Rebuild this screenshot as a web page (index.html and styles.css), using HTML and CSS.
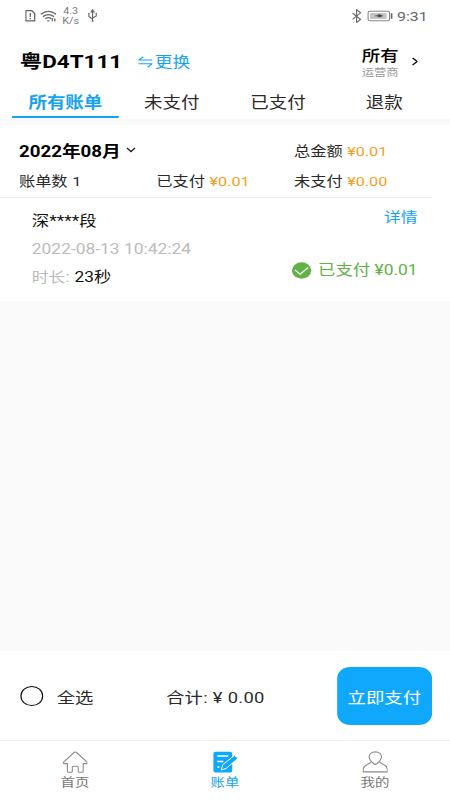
FILE: index.html
```html
<!DOCTYPE html>
<html lang="zh-CN">
<head>
<meta charset="utf-8">
<meta name="viewport" content="width=device-width, initial-scale=1">
<title>账单</title>
<link rel="stylesheet" href="styles.css">
</head>
<body>
<div class="app">
  <header class="status">
    <svg class="ic-left" viewBox="0 0 32 14" preserveAspectRatio="none" fill="none" stroke="#666" stroke-width="1.3">
      <path d="M.7 1.700h6l2.800 2.800v7.300H.7z"/><path d="M5.100 4v4M5.100 9v1.300"/>
      <path d="M15.500 5.300q7.700-6 15.400 0M17.700 7.600q5.500-4 11 0M20 9.800q3.200-2.300 6 0"/><path d="M22 11.800h2M27 9v3.300M29.600 9.600v3"/>
    </svg>
    <div class="speed">4.3<br>K/s</div>
    <svg class="ic-usb" viewBox="0 0 10 14" preserveAspectRatio="none" fill="none" stroke="#666" stroke-width="1.1">
      <path d="M5 1.500v11M1.300 5v2.500L5 10M8.700 5v2L5 9"/><path d="M3.500 3L5 .8 6.500 3zM.6 4.500h1.500M7.900 4.500h1.500M4 12h2"/>
    </svg>
    <svg class="ic-right" viewBox="0 0 42 14" preserveAspectRatio="none" fill="none" stroke="#666" stroke-width="1.1">
      <path d="M1 4l8 6.500-4 3V.8l4 3L1 10.400"/>
      <rect x="16.500" y="2.200" width="21.500" height="9.600" rx="1.500" stroke="#888"/><rect x="18.500" y="4" width="16.500" height="6" fill="#c4c4c4" stroke="none"/>
      <path d="M22 7l5-.9-.3-1.300L32 7l-5 1.500-.4-1z" fill="#444" stroke="none"/><path d="M40 4.300v5.400" stroke-width="1.600"/>
    </svg>
    <span class="clock">9:31</span>
  </header>

  <section class="plate">
    <h1>粤D4T111</h1>
    <a class="switch"><svg viewBox="0 0 15 12" preserveAspectRatio="none" fill="none" stroke="#16a3f0" stroke-width="1.1"><path d="M14.500 4H.8L5.300.7M.5 7.700h13.700L9.700 11.300"/></svg>更换</a>
    <div class="operator"><strong>所有</strong><small>运营商</small></div>
    <svg class="chevron" viewBox="0 0 7 9" preserveAspectRatio="none" fill="none" stroke="#111" stroke-width="1.5"><path d="M1 1l4.600 3.500L1 8"/></svg>
  </section>

  <nav class="tabs"><a class="on">所有账单</a><a>未支付</a><a>已支付</a><a>退款</a></nav>

  <section class="summary">
    <div class="month">2022年08月<svg viewBox="0 0 10 6" preserveAspectRatio="none" fill="none" stroke="#222" stroke-width="1.3"><path d="M1 1l4 3.600L9 1"/></svg></div>
    <div>总金额 <b>¥0.01</b></div>
    <div>账单数 <i>1</i></div>
    <div>已支付 <b>¥0.01</b></div>
    <div>未支付 <b>¥0.00</b></div>
  </section>

  <article class="bill">
    <div class="info">
      <p class="road">深****段</p>
      <p class="date">2022-08-13 10:42:24</p>
      <p class="time">时长: <span>23秒</span></p>
    </div>
    <div class="state">
      <a>详情</a>
      <p><svg viewBox="0 0 20 17" preserveAspectRatio="none"><ellipse cx="10" cy="8.500" rx="9.600" ry="8.200" fill="#62b146"/><path d="M3.500 8l5 4.200 8-6.700" fill="none" stroke="#fff" stroke-width="1.3"/></svg><span>已支付 ¥0.01</span></p>
    </div>
  </article>

  <main class="blank"></main>

  <section class="pay">
    <span class="radio"></span><span class="all">全选</span>
    <span class="total">合计: ¥ 0.00</span>
    <button>立即支付</button>
  </section>

  <footer class="nav">
    <a><svg viewBox="0 0 26 22" preserveAspectRatio="none" fill="none" stroke="#8c8c8c" stroke-width="1.1"><path d="M12 1.300Q13 .6 14 1.300L24.800 11q1 1.500-.8 1.600h-3v7.700q0 1-1 1h-3q-1 0-1-1v-4q0-1-1-1h-4q-1 0-1 1v4q0 1-1 1H6q-1 0-1-1v-7.700H2Q.2 12.500 1.200 11z"/></svg>首页</a>
    <a class="on"><svg viewBox="0 0 26 22" preserveAspectRatio="none"><path d="M3 .7h15q2 0 2 2v16.800q0 2-2 2H3q-2 0-2-2V2.700q0-2 2-2z" fill="#10a8fc"/><path d="M5 5h11M5 10.500h6M5 16h2" stroke="#fff" stroke-width="1.3"/><path d="M9 19l1.200-5L22.300 4.300l3.500 3L13.800 17.500z" fill="#10a8fc" stroke="#fff" stroke-width="1"/></svg>账单</a>
    <a><svg viewBox="0 0 26 22" preserveAspectRatio="none" fill="none" stroke="#8c8c8c" stroke-width="1.1"><path d="M13 .9c4 0 6.200 2.400 6.200 5.100 0 2.600-2.700 5-4.700 6.800q-1.500 1.200-3 0C9.500 11 6.800 8.600 6.800 6 6.800 3.300 9 .9 13 .9z"/><path d="M9 11.300L4 14Q.8 15.500.8 18.500V20.900h24.400v-2.400q0-3-3.200-4.500L17 11.300"/></svg>我的</a>
  </footer>
</div>
</body>
</html>
```

FILE: styles.css
```css
* { box-sizing: border-box; margin: 0; padding: 0; }
body { width: 450px; height: 800px; overflow: hidden; background: #fff; }
a { text-decoration: none; }
b, i { font-weight: 400; font-style: normal; }
svg { display: block; flex: none; }

/* 375-unit layout stretched to the full 450px width */
.app {
  width: 375px; height: 800px;
  display: flex; flex-direction: column;
  transform: scaleX(1.2); transform-origin: 0 0;
  font-family: Roboto, "Noto Sans CJK SC", sans-serif;
  color: #2a2a2a; background: #fff; white-space: nowrap;
}

.status { height: 32px; display: flex; align-items: center; padding: 0 18.700px 0 20.500px; color: #666; }
.ic-left { width: 26.700px; height: 14px; }
.speed { margin-left: 4.700px; font-size: 9px; line-height: 10px; text-align: center; width: 14px; color: #777; }
.ic-usb { margin-left: 6.800px; width: 8.300px; height: 14px; }
.ic-right { margin-left: auto; width: 35px; height: 14px; }
.clock { margin-left: 2.500px; font-size: 13.200px; }

.plate { height: 54px; display: flex; align-items: center; padding: 5px 0 0 16.500px; }
.plate h1 { font-size: 18.700px; line-height: 24px; font-weight: 700; color: #000; width: 98px; }
.switch { display: flex; align-items: center; font-size: 14.700px; line-height: 20px; color: #16a3f0; }
.switch svg { width: 12.500px; height: 12px; margin-right: 2px; }
.operator { margin-left: auto; width: 41px; padding-top: 2px; }
.operator strong, .operator small { display: block; }
.operator strong { font-size: 15.300px; line-height: 19px; font-weight: 500; color: #000; }
.operator small { font-size: 10.200px; line-height: 13px; color: #999; }
.chevron { width: 5.800px; height: 9px; margin-right: 26.700px; }

.tabs { height: 33px; display: grid; grid-template-columns: repeat(4, 88.600px); padding-left: 10.200px; }
.tabs a { font-size: 15.400px; line-height: 30px; padding-top: 2px; height: 32px; text-align: center; border-bottom: 2px solid transparent; }
.tabs .on { color: #16a3f0; font-weight: 700; border-color: #16a3f0; }

.summary {
  height: 79px; border-top: 6px solid #fafafa;
  display: grid; grid-template-columns: 114.500px 114.700px 1fr; grid-template-rows: 30px 30px;
  align-items: center; padding: 10px 0 0 15.800px;
  font-size: 13.500px; word-spacing: .5px;
}
.summary b { color: #f5a024; }
.month { grid-column: span 2; display: flex; align-items: center; font-size: 15.600px; font-weight: 700; color: #000; }
.month svg { width: 8.300px; height: 6px; margin-left: 4px; }

.bill { height: 103px; display: flex; justify-content: space-between; padding: 0 27px 0 26.500px; position: relative; font-size: 14px; }
.bill::before { content: ""; position: absolute; left: 0; top: -1px; width: 360px; height: 1px; background: #eee; }
.info { padding-top: 10px; }
.info p { line-height: 28px; }
.info .road { font-size: 14.500px; color: #111; }
.info .date { font-size: 14.500px; line-height: 27px; color: #bbb; }
.time { color: #bbb; }
.time span { color: #111; font-size: 14.400px; margin-left: .7px; }
.state { text-align: right; padding-top: 5px; }
.state a { color: #16a3f0; line-height: 28px; display: block; }
.state p { display: flex; align-items: center; margin-top: 24px; line-height: 28px; font-size: 14.500px; color: #62b146; }
.state p span { padding-top: 2px; }
.state svg { width: 16.700px; height: 17px; margin-right: 5px; }

.blank { flex: 1; background: #fafafa; }

.pay { height: 89px; display: flex; align-items: center; padding: 1px 15.500px 0 16.600px; font-size: 15.300px; }
.radio { width: 19px; height: 19.500px; border: 1.200px solid #111; border-radius: 50%; }
.all { margin-left: 11.700px; width: 91px; }
.total { letter-spacing: .25px; }
.pay button {
  margin-left: auto; width: 78.500px; height: 58px; border: 0; border-radius: 11px;
  background: #10a8fc; color: #fff; font: inherit;
}

.nav { height: 60px; border-top: 1px solid #f0f0f0; display: grid; grid-template-columns: repeat(3, 1fr); }
.nav a { display: flex; flex-direction: column; align-items: center; padding-top: 10px; font-size: 12px; line-height: 20px; color: #777; }
.nav svg { width: 21.500px; height: 22px; }
.nav .on { color: #16a3f0; }
```
